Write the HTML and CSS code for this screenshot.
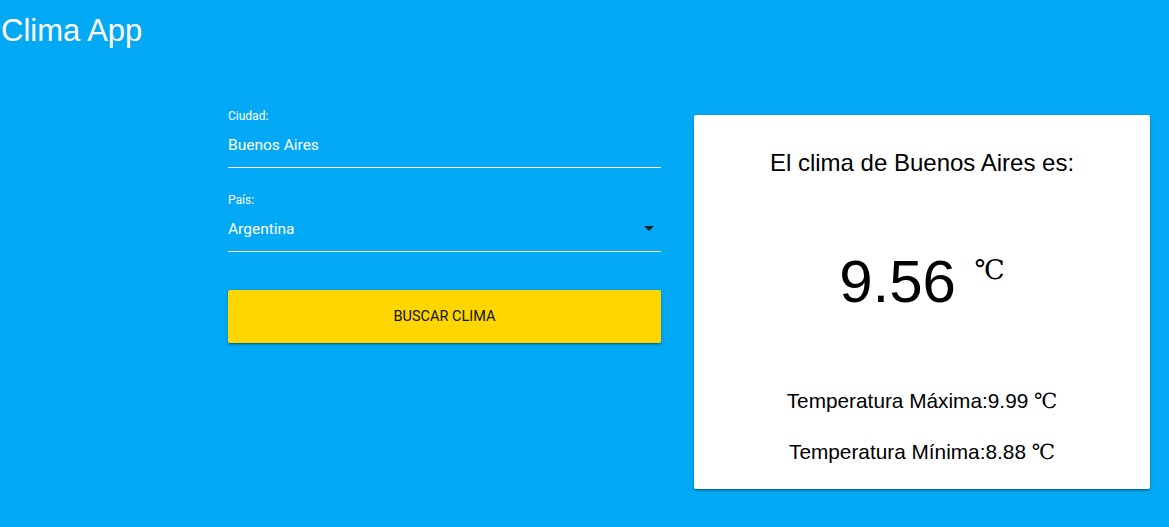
FILE: index.html
```html
<!DOCTYPE html>
<html lang="es">
<head>
<meta charset="utf-8">
<title>Clima App</title>
<link rel="stylesheet" href="styles.css">
</head>
<body>
<header class="app-header">
  <h1 class="brand">Clima App</h1>
</header>
<main class="layout">
  <form class="search-form">
    <div class="field">
      <label class="field-label">Ciudad:</label>
      <div class="field-input">Buenos Aires</div>
    </div>
    <div class="field">
      <label class="field-label">País:</label>
      <div class="field-input field-select">
        <span>Argentina</span>
        <svg class="caret" width="10" height="5" viewBox="0 0 10 5"><path d="M0 0H10L5 5Z" fill="#222"/></svg>
      </div>
    </div>
    <button type="button" class="search-btn">BUSCAR CLIMA</button>
  </form>
  <section class="result-card">
    <h2 class="result-title">El clima de Buenos Aires es:</h2>
    <p class="result-temp">9.56 <span class="deg deg-big">℃</span></p>
    <p class="result-line">Temperatura Máxima:9.99 <span class="deg">℃</span></p>
    <p class="result-line result-line-min">Temperatura Mínima:8.88 <span class="deg">℃</span></p>
  </section>
</main>
</body>
</html>
```
FILE: styles.css
```css
html, body {
  margin: 0;
  padding: 0;
}
body {
  background: #03a9f4;
  min-height: 527px;
  font-family: "Liberation Sans", Arial, sans-serif;
  overflow: hidden;
}
.app-header {
  padding-top: 11px;
  padding-left: 1px;
}
.brand {
  margin: 0;
  font-weight: 400;
  font-size: 31px;
  line-height: 40px;
  color: #fff;
}
.layout {
  display: flex;
  align-items: flex-start;
  margin-top: 57px;
  padding-left: 228px;
}
.search-form {
  width: 433px;
  font-family: Roboto, "Noto Sans", sans-serif;
  color: #fff;
  padding-top: 1px;
}
.field {
  margin-bottom: 25px;
}
.field-label {
  display: block;
  font-size: 12px;
  line-height: 14px;
}
.field-input {
  line-height: 45px;
  font-size: 15.5px;
  border-bottom: 1px solid #fff;
  box-sizing: border-box;
  height: 45px;
}
.field-select {
  display: flex;
  justify-content: space-between;
  align-items: center;
  padding-right: 7px;
}
.caret {
  display: block;
  margin-top: -2px;
}
.search-btn {
  display: block;
  width: 100%;
  height: 53px;
  margin-top: 38px;
  border: none;
  border-radius: 2px;
  background: #ffd600;
  color: #111;
  font-family: Roboto, "Noto Sans", sans-serif;
  font-size: 14.5px;
  font-weight: 400;
  box-shadow: 0 2px 2px 0 rgba(0,0,0,0.14), 0 1px 5px 0 rgba(0,0,0,0.12), 0 3px 1px -2px rgba(0,0,0,0.2);
}
.result-card {
  width: 456px;
  margin-left: 33px;
  margin-top: 7px;
  background: #fff;
  border-radius: 2px;
  box-shadow: 0 2px 2px 0 rgba(0,0,0,0.14), 0 1px 5px 0 rgba(0,0,0,0.12), 0 3px 1px -2px rgba(0,0,0,0.2);
  padding: 33px 0 24px;
  text-align: center;
  color: #000;
}
.result-title {
  margin: 0;
  font-weight: 400;
  font-size: 24px;
  line-height: 30px;
}
.result-temp {
  margin: 73px 0 0;
  font-size: 60px;
  line-height: 61px;
}
.deg {
  font-family: "Liberation Serif", "DejaVu Serif", serif;
}
.deg-big {
  font-size: 27px;
  line-height: 0;
  vertical-align: 23px;
  margin-left: 2px;
}
.result-line {
  margin: 76px 0 0;
  font-size: 20.8px;
  line-height: 26px;
}
.result-line-min {
  margin-top: 25px;
}
```
